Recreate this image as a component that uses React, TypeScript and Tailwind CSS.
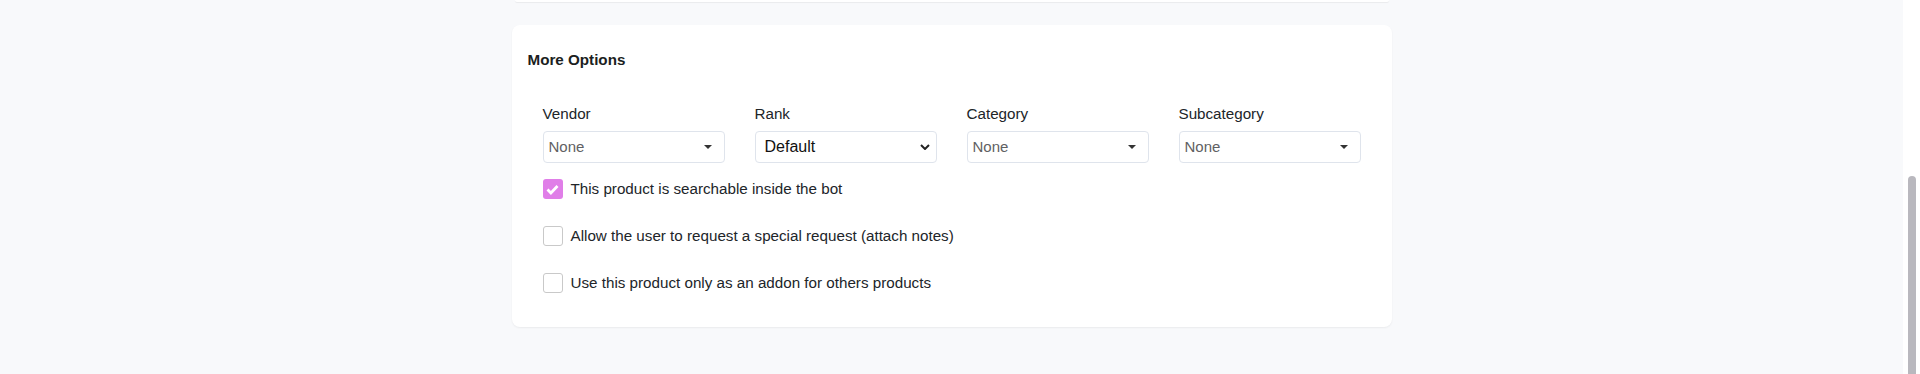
import React from 'react';

const fields = [
  { label: 'Vendor', value: 'None', kind: 'caret' },
  { label: 'Rank', value: 'Default', kind: 'native' },
  { label: 'Category', value: 'None', kind: 'caret' },
  { label: 'Subcategory', value: 'None', kind: 'caret' },
];

const options = [
  { text: 'This product is searchable inside the bot', checked: true },
  { text: 'Allow the user to request a special request (attach notes)', checked: false },
  { text: 'Use this product only as an addon for others products', checked: false },
];

const Caret = () => (
  <svg width="8" height="4" viewBox="0 0 8 4" className="shrink-0">
    <path d="M0 0h8L4 4z" fill="#333" />
  </svg>
);

const Chevron = () => (
  <svg width="10" height="6" viewBox="0 0 10 6" className="shrink-0">
    <path d="M1 1l4 4 4-4" fill="none" stroke="#222" strokeWidth="2" />
  </svg>
);

const Check = () => (
  <svg width="13" height="11" viewBox="0 0 13 11">
    <path d="M1.5 5.6l3.4 3.4L11.5 2" fill="none" stroke="#fff" strokeWidth="2.8" />
  </svg>
);

export default function App() {
  return (
    <div
      className="flex h-[374px] w-[1920px] overflow-hidden bg-[#f8f9fb] text-[#212529]"
      style={{ fontFamily: '"Liberation Sans", Arial, sans-serif' }}
    >
      <div className="flex w-[1903px] flex-col items-center">
        {/* bottom of the previous card */}
        <div className="h-[2px] w-[874px] rounded-b-lg bg-white shadow-[0_1px_1px_rgba(0,0,0,0.06)]"></div>

        {/* More Options */}
        <div className="mt-[23px] w-[880px] rounded-lg bg-white px-4 pt-[26px] pb-[34px] shadow-[0_1px_2px_rgba(0,0,0,0.06)]">
          <h3 className="text-[15.2px] font-bold leading-[17px] text-[#1b1e21]">More Options</h3>

          <div className="mt-[37px] grid grid-cols-4">
            {fields.map((f) => (
              <div key={f.label} className="px-[15px]">
                <label className="mb-[9px] block text-[15.2px] leading-[17px] text-[#212529]">{f.label}</label>
                {f.kind === 'caret' ? (
                  <div className="flex h-8 items-center justify-between rounded border border-[#dfe4ec] bg-white pr-3 pl-[5px]">
                    <span className="text-[15px] text-[#5f6163]">{f.value}</span>
                    <Caret />
                  </div>
                ) : (
                  <div className="flex h-8 items-center justify-between rounded border border-[#dfe4ec] bg-white pr-[6px] pl-[9px]">
                    <span className="text-[16px] text-[#111]">{f.value}</span>
                    <Chevron />
                  </div>
                )}
              </div>
            ))}
          </div>

          <div className="mt-4 flex flex-col gap-[27px] px-[15px]">
            {options.map((o) => (
              <div key={o.text} className="flex h-5 items-center gap-2">
                {o.checked ? (
                  <span className="flex h-5 w-5 items-center justify-center rounded-[3px] bg-[#e07ee8]">
                    <Check />
                  </span>
                ) : (
                  <span className="h-5 w-5 rounded-[3px] border border-[#c9c9c9] bg-white"></span>
                )}
                <span className="text-[15.2px] leading-5 text-[#212529]">{o.text}</span>
              </div>
            ))}
          </div>
        </div>
      </div>

      {/* scrollbar */}
      <div className="flex w-[17px] justify-center bg-white pt-[176px]">
        <div className="w-2 rounded-t-full bg-[#b9b8be]"></div>
      </div>
    </div>
  );
}
